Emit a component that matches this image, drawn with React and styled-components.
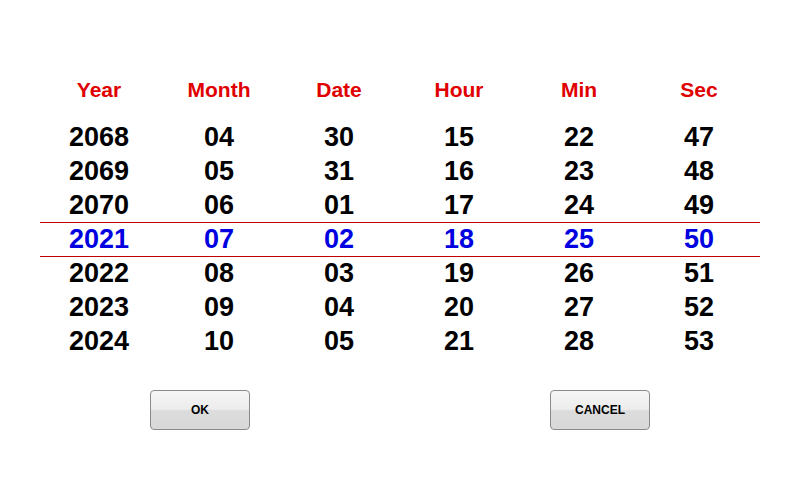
import React from "react";
import styled, { createGlobalStyle } from "styled-components";

const Global = createGlobalStyle`
  html, body { margin: 0; padding: 0; background: #fff; }
  body { width: 800px; height: 480px; overflow: hidden; font-family: "Liberation Sans", Arial, sans-serif; }
`;

const Screen = styled.div`
  width: 800px;
  height: 480px;
  display: flex;
  flex-direction: column;
  align-items: center;
  padding-top: 78px;
  box-sizing: border-box;
`;

const Grid = styled.div`
  width: 720px;
  display: grid;
  grid-template-columns: repeat(6, 120px);
  position: relative;
  left: -1px;
`;

const Header = styled.div`
  text-align: center;
  color: #e00000;
  font-weight: bold;
  font-size: 21px;
  height: 24px;
  line-height: 24px;
  margin-bottom: 18px;
`;

const Column = styled.div`
  display: flex;
  flex-direction: column;
`;

const Cell = styled.div`
  text-align: center;
  font-weight: bold;
  font-size: 27px;
  height: 34px;
  line-height: 34px;
  color: ${(p) => (p.$selected ? "#0000e0" : "#000")};
`;

const Band = styled.div`
  position: absolute;
  left: 1px;
  right: -1px;
  top: ${(p) => p.$top}px;
  height: 33px;
  border-top: 1px solid #c00000;
  border-bottom: 1px solid #c00000;
  pointer-events: none;
`;

const Buttons = styled.div`
  width: 800px;
  display: flex;
  justify-content: space-between;
  padding: 0 150px;
  box-sizing: border-box;
  margin-top: 32px;
`;

const Button = styled.button`
  width: 100px;
  height: 40px;
  border: 1px solid #8a8a8a;
  border-radius: 4px;
  background: linear-gradient(to bottom, #f6f6f6 0%, #ececec 48%, #dcdcdc 52%, #d8d8d8 100%);
  font-family: "Liberation Sans", Tahoma, sans-serif;
  font-weight: bold;
  font-size: 12px;
  color: #000;
  padding: 0;
`;

const columns = [
  { title: "Year", values: ["2068", "2069", "2070", "2021", "2022", "2023", "2024"] },
  { title: "Month", values: ["04", "05", "06", "07", "08", "09", "10"] },
  { title: "Date", values: ["30", "31", "01", "02", "03", "04", "05"] },
  { title: "Hour", values: ["15", "16", "17", "18", "19", "20", "21"] },
  { title: "Min", values: ["22", "23", "24", "25", "26", "27", "28"] },
  { title: "Sec", values: ["47", "48", "49", "50", "51", "52", "53"] },
];

export default function App() {
  return (
    <>
      <Global />
      <Screen>
        <Grid>
          {columns.map((c) => (
            <Column key={c.title}>
              <Header>{c.title}</Header>
              {c.values.map((v, i) => (
                <Cell key={i} $selected={i === 3}>{v}</Cell>
              ))}
            </Column>
          ))}
          <Band $top={144} />
        </Grid>
        <Buttons>
          <Button>OK</Button>
          <Button>CANCEL</Button>
        </Buttons>
      </Screen>
    </>
  );
}
